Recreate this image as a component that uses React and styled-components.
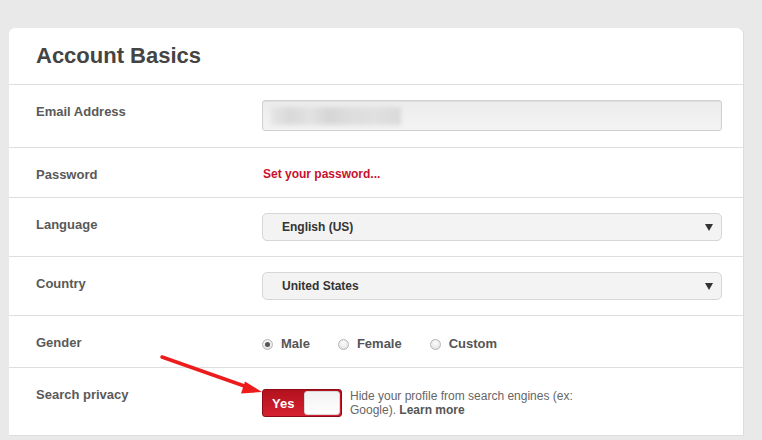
import React from "react";
import styled, { createGlobalStyle } from "styled-components";

const Global = createGlobalStyle`
  html, body { margin: 0; padding: 0; background: #e9e9e9; }
  body { font-family: "Liberation Sans", Arial, sans-serif; }
`;

const Page = styled.div`
  padding: 28px 0 0 9px;
  height: 440px;
  box-sizing: border-box;
  overflow: hidden;
  position: relative;
`;

const Card = styled.section`
  width: 734px;
  background: #fff;
  border-radius: 6px 6px 0 0;
  box-shadow: 1px 0 0 #dcdcdc;
`;

const Header = styled.header`
  height: 56px;
  border-bottom: 1px solid #dedede;
  padding-left: 27px;
  display: flex;
  align-items: flex-start;
`;

const Title = styled.h1`
  margin: 15px 0 0;
  font-size: 22px;
  line-height: 26px;
  font-weight: bold;
  color: #444;
`;

const Row = styled.div`
  display: grid;
  grid-template-columns: 253px 460px;
  height: ${(p) => p.$h}px;
  border-bottom: 1px solid #dedede;
  align-items: start;
`;

const Label = styled.div`
  padding: 19px 0 0 27px;
  font-size: 13px;
  line-height: 16px;
  font-weight: bold;
  color: #595959;
`;

const Cell = styled.div`
  padding-top: ${(p) => p.$pt}px;
  display: flex;
  align-items: ${(p) => (p.$top ? "flex-start" : "center")};
`;

const Input = styled.div`
  width: 460px;
  height: 31px;
  box-sizing: border-box;
  border: 1px solid #d3d0cb;
  border-radius: 3px;
  background: linear-gradient(#ececec, #f3f3f3);
  box-shadow: inset 0 1px 1px rgba(0, 0, 0, 0.06);
  display: flex;
  align-items: center;
  padding-left: 8px;
`;

const Blur = styled.span`
  display: block;
  width: 130px;
  height: 18px;
  background: linear-gradient(
    90deg,
    #e4e4e4 0%,
    #d9d9d9 15%,
    #e2e2e2 30%,
    #d6d6d6 45%,
    #dddddd 60%,
    #e0e0e0 80%,
    #dadada 100%
  );
  filter: blur(2px);
`;

const RedLink = styled.a`
  font-size: 12px;
  line-height: 16px;
  font-weight: bold;
  color: #c8102e;
  text-decoration: none;
  margin-left: 1px;
`;

const Select = styled.div`
  width: 460px;
  height: 28px;
  box-sizing: border-box;
  border: 1px solid #d6d6d6;
  border-radius: 5px;
  background: #f3f3f3;
  display: flex;
  align-items: center;
  justify-content: space-between;
  padding: 0 8px 0 19px;
  font-size: 12px;
  font-weight: bold;
  color: #333;
`;

const Caret = styled.span`
  width: 0;
  height: 0;
  border-left: 4px solid transparent;
  border-right: 4px solid transparent;
  border-top: 7px solid #333;
  margin-top: 1px;
`;

const RadioGroup = styled.div`
  display: flex;
  gap: 28px;
`;

const RadioItem = styled.label`
  display: flex;
  align-items: center;
  gap: 8px;
  font-size: 13px;
  line-height: 16px;
  font-weight: bold;
  color: #555;
`;

const RadioDot = styled.span`
  width: 11px;
  height: 11px;
  box-sizing: border-box;
  border-radius: 50%;
  border: 1px solid #b5b5b5;
  background: radial-gradient(circle at 50% 35%, #fdfdfd, #dcdcdc);
  display: flex;
  align-items: center;
  justify-content: center;
  &::after {
    content: "";
    width: 5px;
    height: 5px;
    border-radius: 50%;
    background: ${(p) => (p.$on ? "#555" : "transparent")};
  }
`;

const Toggle = styled.div`
  width: 80px;
  height: 28px;
  box-sizing: border-box;
  border: 1px solid #8c0c16;
  border-radius: 3px;
  background: linear-gradient(#b3111e, #d52131);
  display: flex;
  align-items: center;
  padding: 0 1px 0 9px;
  justify-content: space-between;
  flex-shrink: 0;
`;

const ToggleText = styled.span`
  color: #fff;
  font-size: 13px;
  font-weight: bold;
`;

const Knob = styled.span`
  width: 36px;
  height: 24px;
  box-sizing: border-box;
  border-radius: 3px;
  background: linear-gradient(#f2f2f2, #ffffff);
  border: 1px solid #d8d8d8;
`;

const Desc = styled.div`
  margin: 0 0 0 8px;
  font-size: 12px;
  line-height: 14px;
  color: #666;
`;

const DescLine = styled.span`
  display: block;
  white-space: nowrap;
`;

const More = styled.span`
  color: #555;
  font-weight: bold;
`;

const Arrow = styled.svg`
  position: absolute;
  left: 0;
  top: 0;
  pointer-events: none;
`;

export default function App() {
  return (
    <Page>
      <Global />
      <Card>
        <Header>
          <Title>Account Basics</Title>
        </Header>
        <Row $h={62}>
          <Label>Email Address</Label>
          <Cell $pt={15}>
            <Input>
              <Blur />
            </Input>
          </Cell>
        </Row>
        <Row $h={49}>
          <Label>Password</Label>
          <Cell $pt={18}>
            <RedLink href="#">Set your password...</RedLink>
          </Cell>
        </Row>
        <Row $h={58}>
          <Label>Language</Label>
          <Cell $pt={15}>
            <Select>
              English (US)
              <Caret />
            </Select>
          </Cell>
        </Row>
        <Row $h={58}>
          <Label>Country</Label>
          <Cell $pt={15}>
            <Select>
              United States
              <Caret />
            </Select>
          </Cell>
        </Row>
        <Row $h={51}>
          <Label>Gender</Label>
          <Cell $pt={20}>
            <RadioGroup>
              <RadioItem>
                <RadioDot $on />
                Male
              </RadioItem>
              <RadioItem>
                <RadioDot />
                Female
              </RadioItem>
              <RadioItem>
                <RadioDot />
                Custom
              </RadioItem>
            </RadioGroup>
          </Cell>
        </Row>
        <Row $h={67}>
          <Label>Search privacy</Label>
          <Cell $pt={21} $top>
            <Toggle>
              <ToggleText>Yes</ToggleText>
              <Knob />
            </Toggle>
            <Desc>
              <DescLine>Hide your profile from search engines (ex:</DescLine>
              <DescLine>
                Google). <More>Learn more</More>
              </DescLine>
            </Desc>
          </Cell>
        </Row>
      </Card>
      <Arrow width="762" height="440" viewBox="0 0 762 440">
        <line
          x1="162"
          y1="357"
          x2="250"
          y2="388"
          stroke="#ec1c1c"
          strokeWidth="3.5"
          strokeLinecap="round"
        />
        <polygon points="262,392 245,381.5 241,393.5" fill="#ec1c1c" />
      </Arrow>
    </Page>
  );
}
